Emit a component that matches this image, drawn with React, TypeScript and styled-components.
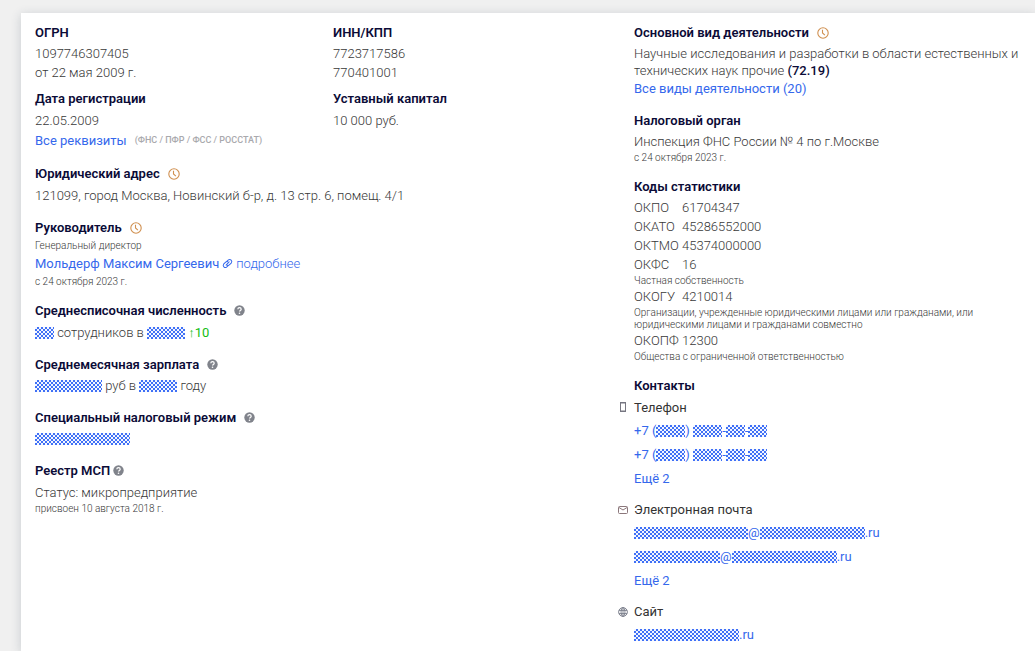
import React from 'react';
import styled, { createGlobalStyle } from 'styled-components';

const GlobalStyle = createGlobalStyle`
  * { box-sizing: border-box; }
  body {
    margin: 0;
    background: #f0f0f0;
    color: #383838;
    font: 300 13px/19px Roboto, "Liberation Sans", sans-serif;
  }
`;

const Card = styled.main`
  display: grid;
  grid-template-columns: 583fr 403fr;
  min-height: calc(100vh - 13px);
  margin: 13px 0 0 21px;
  padding: 10px 14px 0;
  background: #fff;
  box-shadow: 0 2px 10px rgba(40, 60, 80, 0.2);
`;

const Column = styled.div`
  min-width: 0;
`;

const SideColumn = styled(Column)`
  padding-left: 16px;
`;

const Pair = styled.div`
  display: grid;
  grid-template-columns: 298fr 285fr;
  row-gap: 7px;
  margin-bottom: 14px;
`;

const Section = styled.section`
  margin-bottom: 13px;
`;

const Cell = styled.section``;

const Heading = styled.h2<{ $tight?: boolean; $gap?: number }>`
  display: flex;
  align-items: center;
  gap: ${p => p.$gap ?? 8}px;
  margin: 0 0 ${p => (p.$tight ? 2 : 3)}px;
  color: #0b0b37;
  font-size: 13px;
  font-weight: 600;
  line-height: 19px;
`;

const Line = styled.p`
  margin: 0;
`;

const Paragraph = styled(Line)`
  line-height: 17px;
`;

const Code = styled.span`
  color: #0b0b37;
  font-weight: 500;
`;

const Note = styled.p<{ $gap?: number }>`
  margin: ${p => p.$gap ?? 0}px 0 0;
  color: #383838;
  font-size: 10px;
  font-weight: 300;
  line-height: 12px;
`;

const Link = styled.a<{ $light?: boolean }>`
  color: #3568ec;
  font-weight: ${p => (p.$light ? 300 : 400)};
  text-decoration: none;
`;

const LinkRow = styled.p<{ $gap: number; $top?: number }>`
  display: flex;
  align-items: center;
  gap: ${p => p.$gap}px;
  margin: ${p => p.$top ?? 1}px 0 0;
`;

const Hint = styled.span`
  color: #a9a9ad;
  font-size: 9px;
  font-weight: 500;
`;

const Growth = styled.span`
  color: #12bd12;
  font-weight: 400;
`;

const Arrow = styled.span`
  font-family: "Liberation Sans", sans-serif;
`;

const Codes = styled.dl`
  margin: 0;
`;

const CodeRow = styled.div`
  display: grid;
  grid-template-columns: 48px 1fr;
`;

const CodeName = styled.dt``;

const CodeValue = styled.dd`
  margin: 0;
`;

const CodeNote = styled(Note).attrs({ as: 'dd' })`
  grid-column: 1 / -1;
`;

const ContactGroup = styled.section`
  margin-bottom: 9px;
`;

const ContactTitle = styled.h3`
  display: grid;
  grid-template-columns: 16px 1fr;
  align-items: center;
  margin: 0 0 2px -16px;
  color: #333;
  font-size: 13px;
  font-weight: 400;
  line-height: 19px;
`;

const ContactList = styled.ul`
  margin: 0;
  padding: 0;
  list-style: none;
  line-height: 24px;
`;

const Masked = styled.span`
  display: inline-block;
  height: 12px;
  vertical-align: -2px;
  background: conic-gradient(#3f70f6 25%, #f4f7ff 0 50%, #3f70f6 0 75%, #f4f7ff 0) 0 0 / 4px 4px;
`;

const Icon = styled.svg`
  display: block;
  flex: none;
`;

const Mask = ({ n }: { n: number }) => (
  <Masked role="img" aria-label="скрыто" style={{ width: Math.round(n * 9.5) }} />
);

const Clock = () => (
  <Icon width="12" height="12" viewBox="0 0 12 12" fill="none" stroke="#d09050" strokeWidth="1.1" aria-hidden>
    <circle cx="6" cy="6" r="5.2" />
    <path d="M5.5 2.8V6l2.4 2.2" />
  </Icon>
);

const Question = () => (
  <Icon width="11" height="11" viewBox="0 0 11 11" aria-hidden>
    <circle cx="5.5" cy="5.5" r="5.2" fill="#80838b" />
    <path d="M3.8 4.2c.1-2 3.4-2 3.4 0 0 1.2-1.7 1.2-1.7 2.4" fill="none" stroke="#fff" strokeWidth="1.2" />
    <circle cx="5.5" cy="8.3" r=".8" fill="#fff" />
  </Icon>
);

const Chain = () => (
  <Icon width="11" height="11" viewBox="0 0 24 24" fill="none" stroke="#3568ec" strokeWidth="2.2" strokeLinecap="round" aria-hidden>
    <path d="M9 15.5l6.5-7" />
    <path d="M10.5 7.5 14 4a4.7 4.7 0 0 1 6.5 6.5l-4.5 4.5a4.5 4.5 0 0 1-4.5 1" />
    <path d="M13.5 16.5 10 20a4.7 4.7 0 0 1-6.5-6.5L8 9a4.5 4.5 0 0 1 4.5-1" />
  </Icon>
);

const Phone = () => (
  <Icon width="10" height="11" viewBox="0 0 10 11" fill="none" stroke="#777781" aria-hidden>
    <rect x="2.5" y=".5" width="5" height="9" />
    <path d="M2 1h6M2 9h6" />
  </Icon>
);

const Mail = () => (
  <Icon width="10" height="10" viewBox="0 0 10 10" fill="none" stroke="#8b777b" aria-hidden>
    <rect x=".5" y="1.5" width="9" height="7" rx="1" />
    <path d="m1 2.5 4 2.5 4-2.5" />
  </Icon>
);

const Globe = () => (
  <Icon width="10" height="10" viewBox="0 0 10 10" fill="none" stroke="#777b88" strokeWidth=".9" aria-hidden>
    <circle cx="5" cy="5" r="4.4" />
    <ellipse cx="5" cy="5" rx="2" ry="4.4" />
    <path d="M5 .6v8.8M1 3.4h8M1 6.6h8" />
  </Icon>
);

const PhoneNumber = () => (
  <li>
    <Link href="#phone">+7 (<Mask n={3} />) <Mask n={3} />-<Mask n={2} />-<Mask n={2} /></Link>
  </li>
);

export default function App() {
  return (
    <>
      <GlobalStyle />
      <Card>
        <Column>
          <Pair>
            <Cell>
              <Heading $tight>ОГРН</Heading>
              <Line>1097746307405</Line>
              <Line>от 22 мая 2009 г.</Line>
            </Cell>
            <Cell>
              <Heading $tight>ИНН/КПП</Heading>
              <Line>7723717586</Line>
              <Line>770401001</Line>
            </Cell>
            <Cell>
              <Heading>Дата регистрации</Heading>
              <Line>22.05.2009</Line>
              <LinkRow $gap={8}>
                <Link href="#details">Все реквизиты</Link>
                <Hint>(ФНС / ПФР / ФСС / РОССТАТ)</Hint>
              </LinkRow>
            </Cell>
            <Cell>
              <Heading>Уставный капитал</Heading>
              <Line>10 000 руб.</Line>
            </Cell>
          </Pair>
          <Section>
            <Heading>Юридический адрес <Clock /></Heading>
            <Line>121099, город Москва, Новинский б-р, д. 13 стр. 6, помещ. 4/1</Line>
          </Section>
          <Section>
            <Heading>Руководитель <Clock /></Heading>
            <Note>Генеральный директор</Note>
            <LinkRow $gap={3} $top={2}>
              <Link href="#director">Мольдерф Максим Сергеевич</Link>
              <Chain />
              <Link href="#more" $light>подробнее</Link>
            </LinkRow>
            <Note $gap={3}>с 24 октября 2023 г.</Note>
          </Section>
          <Section>
            <Heading>Среднесписочная численность <Question /></Heading>
            <Line><Mask n={2} /> сотрудников в <Mask n={4} /> <Growth><Arrow>↑</Arrow>10</Growth></Line>
          </Section>
          <Section>
            <Heading $tight>Среднемесячная зарплата <Question /></Heading>
            <Line><Mask n={7} /> руб в <Mask n={4} /> году</Line>
          </Section>
          <Section>
            <Heading $tight>Специальный налоговый режим <Question /></Heading>
            <Line><Mask n={10} /></Line>
          </Section>
          <Section>
            <Heading $gap={3}>Реестр МСП <Question /></Heading>
            <Line>Статус: микропредприятие</Line>
            <Note $gap={1}>присвоен 10 августа 2018 г.</Note>
          </Section>
        </Column>
        <SideColumn>
          <Section>
            <Heading>Основной вид деятельности <Clock /></Heading>
            <Paragraph>
              Научные исследования и разработки в области естественных и технических наук прочие <Code>(72.19)</Code>
            </Paragraph>
            <Line><Link href="#activities">Все виды деятельности (20)</Link></Line>
          </Section>
          <Section>
            <Heading $tight>Налоговый орган</Heading>
            <Line>Инспекция ФНС России № 4 по г.Москве</Line>
            <Note $gap={1}>с 24 октября 2023 г.</Note>
          </Section>
          <Section>
            <Heading $tight>Коды статистики</Heading>
            <Codes>
              <CodeRow><CodeName>ОКПО</CodeName><CodeValue>61704347</CodeValue></CodeRow>
              <CodeRow><CodeName>ОКАТО</CodeName><CodeValue>45286552000</CodeValue></CodeRow>
              <CodeRow><CodeName>ОКТМО</CodeName><CodeValue>45374000000</CodeValue></CodeRow>
              <CodeRow>
                <CodeName>ОКФС</CodeName><CodeValue>16</CodeValue>
                <CodeNote $gap={1}>Частная собственность</CodeNote>
              </CodeRow>
              <CodeRow>
                <CodeName>ОКОГУ</CodeName><CodeValue>4210014</CodeValue>
                <CodeNote $gap={1}>
                  Организации, учрежденные юридическими лицами или гражданами, или юридическими лицами и гражданами совместно
                </CodeNote>
              </CodeRow>
              <CodeRow>
                <CodeName>ОКОПФ</CodeName><CodeValue>12300</CodeValue>
                <CodeNote $gap={1}>Общества с ограниченной ответственностью</CodeNote>
              </CodeRow>
            </Codes>
          </Section>
          <Heading>Контакты</Heading>
          <ContactGroup>
            <ContactTitle><Phone />Телефон</ContactTitle>
            <ContactList>
              <PhoneNumber />
              <PhoneNumber />
              <li><Link href="#phones">Ещё 2</Link></li>
            </ContactList>
          </ContactGroup>
          <ContactGroup>
            <ContactTitle><Mail />Электронная почта</ContactTitle>
            <ContactList>
              <li><Link href="#mail"><Mask n={12} />@<Mask n={11} />.ru</Link></li>
              <li><Link href="#mail"><Mask n={9} />@<Mask n={11} />.ru</Link></li>
              <li><Link href="#mails">Ещё 2</Link></li>
            </ContactList>
          </ContactGroup>
          <ContactTitle><Globe />Сайт</ContactTitle>
          <ContactList>
            <li><Link href="#site"><Mask n={11} />.ru</Link></li>
          </ContactList>
        </SideColumn>
      </Card>
    </>
  );
}
